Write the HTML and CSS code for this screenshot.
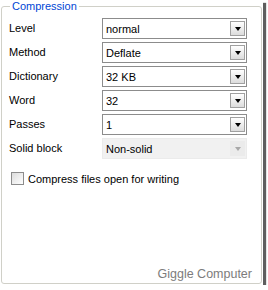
FILE: index.html
```html
<!DOCTYPE html>
<html lang="en">
<head>
    <meta charset="UTF-8">
    <title>Compression</title>
    <link rel="stylesheet" href="styles.css">
</head>
<body>
    <div class="shot">
        <fieldset class="group">
            <legend class="group-title">Compression</legend>

            <div class="rows">
                <label class="row-label">Level</label>
                <div class="combo"><span class="combo-text">normal</span><span class="combo-btn"></span></div>

                <label class="row-label">Method</label>
                <div class="combo"><span class="combo-text">Deflate</span><span class="combo-btn"></span></div>

                <label class="row-label">Dictionary</label>
                <div class="combo"><span class="combo-text">32 KB</span><span class="combo-btn"></span></div>

                <label class="row-label">Word</label>
                <div class="combo"><span class="combo-text">32</span><span class="combo-btn"></span></div>

                <label class="row-label">Passes</label>
                <div class="combo"><span class="combo-text">1</span><span class="combo-btn"></span></div>

                <label class="row-label">Solid block</label>
                <div class="combo disabled"><span class="combo-text">Non-solid</span><span class="combo-btn"></span></div>
            </div>

            <div class="check-row">
                <span class="check-box"></span>
                <span class="check-text">Compress files open for writing</span>
            </div>

            <div class="watermark">Giggle Computer</div>
        </fieldset>
    </div>
</body>
</html>
```

FILE: styles.css
```css
* {
    margin: 0;
    padding: 0;
    box-sizing: border-box;
}

body {
    font-family: 'Liberation Sans', Arial, sans-serif;
    font-size: 11px;
    background: white;
    color: #000;
}

.shot {
    width: 263px;
    height: 285px;
    background: white;
    box-shadow: 3px 3px 1px rgba(40, 40, 40, 0.75);
}

.group {
    margin-left: 1px;
    width: 261px;
    height: 284px;
    border: 1px solid #d0d0c8;
    border-radius: 3px;
    padding: 5px 7px 0 7px;
    display: flex;
    flex-direction: column;
}

.group-title {
    color: #0046d5;
    padding: 0 2px;
    margin-left: 1px;
    line-height: 13px;
    font-size: 11px;
}

.rows {
    display: grid;
    grid-template-columns: 93px 145px;
    row-gap: 3px;
    align-items: center;
}

.row-label {
    line-height: 21px;
}

.combo {
    height: 21px;
    border: 1px solid #8c8c8c;
    background: white;
    display: flex;
    align-items: center;
    justify-content: space-between;
    padding-left: 3px;
}

.combo-btn {
    width: 15px;
    height: 15px;
    margin-right: 1px;
    border: 1px solid #a0a0a0;
    background: linear-gradient(#ffffff, #dcdcdc);
    display: flex;
    align-items: center;
    justify-content: center;
}

.combo-btn::after {
    content: '';
    border-left: 3.5px solid transparent;
    border-right: 3.5px solid transparent;
    border-top: 4px solid #000;
    margin-top: 1px;
}

.combo.disabled {
    border-color: #ebebeb;
    background: #f1f1f1;
}

.combo.disabled .combo-btn {
    border-color: transparent;
    background: #ebebeb;
}

.combo.disabled .combo-btn::after {
    border-top-color: #a8a8a8;
}

.check-row {
    display: flex;
    align-items: center;
    margin-top: 13px;
    margin-left: 2px;
}

.check-box {
    width: 13px;
    height: 13px;
    border: 1px solid #8c8c8c;
    background: linear-gradient(135deg, #dcdcdc, #ffffff);
    margin-right: 4px;
}

.watermark {
    margin-top: auto;
    margin-bottom: 2px;
    text-align: right;
    padding-right: 2px;
    font-size: 12.5px;
    color: #7c7c7c;
}
```
